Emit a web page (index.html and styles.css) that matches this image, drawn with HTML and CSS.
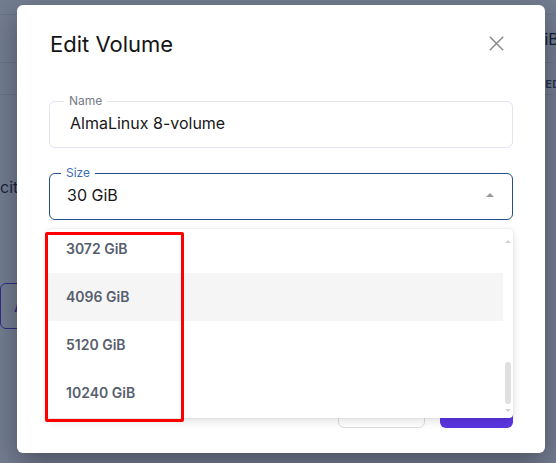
FILE: index.html
```html
<!DOCTYPE html>
<html lang="en">
<head>
<meta charset="utf-8">
<title>Edit Volume</title>
<link rel="stylesheet" href="styles.css">
</head>
<body>
<div class="page">
  <div class="page-row row-a"></div>
  <div class="page-row row-b"><span>30 GiB</span></div>
  <div class="page-row row-c"><span>Used</span></div>
  <p class="page-text">city</p>
  <div class="page-btn">Add Volume</div>
</div>

<div class="overlay">
  <div class="modal">
    <div class="modal-head">
      <h2 class="modal-title">Edit Volume</h2>
      <button class="close" aria-label="Close">
        <svg width="15" height="15" viewBox="0 0 15 15"><path d="M0.8 0.8 L14.2 14.2 M14.2 0.8 L0.8 14.2" stroke="#8a8a8a" stroke-width="1.5" fill="none"/></svg>
      </button>
    </div>

    <fieldset class="field field-name">
      <legend class="field-label">Name</legend>
      <div class="field-value">AlmaLinux 8-volume</div>
    </fieldset>

    <div class="select-wrap">
      <fieldset class="field field-size">
        <legend class="field-label">Size</legend>
        <div class="field-value"><span>30 GiB</span><span class="caret"></span></div>
      </fieldset>
      <div class="menu">
        <div class="menu-list">
          <div class="menu-items">
            <div class="menu-item">3072 GiB</div>
            <div class="menu-item is-hover">4096 GiB</div>
            <div class="menu-item">5120 GiB</div>
            <div class="menu-item">10240 GiB</div>
          </div>
        </div>
        <div class="menu-scroll">
          <span class="arrow arrow-up"></span>
          <span class="track"><span class="thumb"></span></span>
          <span class="arrow arrow-down"></span>
        </div>
      </div>
    </div>

    <div class="modal-foot">
      <button class="btn btn-cancel">Cancel</button>
      <button class="btn btn-primary">Save</button>
    </div>

    <div class="annotation"></div>
  </div>
</div>
</body>
</html>
```

FILE: styles.css
```css
* { box-sizing: border-box; }

html, body {
  margin: 0;
  height: 100%;
  overflow: hidden;
}

body {
  position: relative;
  width: 556px;
  height: 463px;
  background: #ffffff;
  color: #1f2937;
  font-family: Inter, "Noto Sans", "Liberation Sans", sans-serif;
}

/* background page */
.page { width: 620px; }

.page-row {
  display: flex;
  align-items: center;
  border-bottom: 1px solid #e3e6ec;
}

.row-a { height: 15px; }

.row-b {
  height: 48px;
  padding-left: 508px;
  font-size: 16px;
  color: #111827;
}

.row-c {
  height: 32px;
  padding-left: 529px;
  padding-bottom: 3px;
  align-items: flex-end;
  font-size: 11px;
  font-weight: 600;
  text-transform: uppercase;
  letter-spacing: 0.04em;
  color: #374151;
}

.page-text {
  margin: 82px 0 0;
  font-size: 16px;
  line-height: 20px;
  color: #1f2937;
}

.page-btn {
  margin-top: 86px;
  width: 140px;
  height: 46px;
  display: flex;
  align-items: center;
  padding-left: 13px;
  border: 1px solid #5b34e3;
  border-radius: 6px;
  color: #5b34e3;
  font-size: 16px;
  font-weight: 500;
}

/* overlay + modal */
.overlay {
  position: absolute;
  inset: 0;
  display: flex;
  padding: 5px 11px 10px 17px;
  background: rgba(22, 38, 72, 0.6);
}

.modal {
  position: relative;
  flex: 1;
  display: flex;
  flex-direction: column;
  padding: 25px 32px 25px 32px;
  background: #ffffff;
  border-radius: 6px;
  box-shadow: 0 10px 28px rgba(0, 0, 0, 0.35);
}

.modal-head {
  display: flex;
  justify-content: space-between;
  align-items: flex-start;
}

.modal-title {
  margin: 0;
  padding-left: 1px;
  font-size: 22px;
  line-height: 28px;
  font-weight: 400;
  color: #141414;
}

.close {
  margin: 6px 9px 0 0;
  padding: 0;
  border: 0;
  background: none;
  width: 15px;
  height: 15px;
  display: block;
}
.close svg { display: block; }

/* fields */
.field {
  margin: 0;
  padding: 0;
  min-width: 0;
  border: 1px solid #e2e4ef;
  border-radius: 6px;
}

.field-name { margin-top: 36px; }

.field-label {
  padding: 0 5px;
  font-size: 12px;
  line-height: 14px;
  color: #767b86;
}

.field-name .field-label { margin-left: 14px; }

.field-value {
  display: flex;
  justify-content: space-between;
  align-items: center;
  padding: 5px 18px 14px 20px;
  font-size: 16px;
  line-height: 20px;
  color: #171717;
}

.select-wrap {
  position: relative;
  margin-top: 18px;
}

.field-size { border-color: #234f8e; }
.field-size .field-label { margin-left: 11px; color: #3d6cb2; }
.field-size .field-value { padding-left: 17px; }

.caret {
  width: 0;
  height: 0;
  border-left: 4px solid transparent;
  border-right: 4px solid transparent;
  border-bottom: 4px solid #9b9b9b;
}

/* dropdown menu */
.menu {
  position: absolute;
  z-index: 3;
  top: calc(100% + 9px);
  left: -1px;
  right: 0;
  height: 189px;
  display: flex;
  overflow: hidden;
  background: #ffffff;
  border-radius: 4px;
  box-shadow: 0 3px 10px rgba(0, 0, 0, 0.12), 0 0 2px rgba(0, 0, 0, 0.12);
}

.menu-list {
  flex: 1;
  overflow: hidden;
}

.menu-items { margin-top: -4px; }

.menu-item {
  height: 48px;
  line-height: 48px;
  padding-left: 18px;
  font-size: 14px;
  font-weight: 600;
  color: #565e6d;
}

.menu-item.is-hover { background: #f5f5f5; }

.menu-scroll {
  width: 10px;
  display: flex;
  flex-direction: column;
  align-items: center;
  padding: 11px 0 6px;
}

.arrow {
  width: 0;
  height: 0;
  border-left: 3px solid transparent;
  border-right: 3px solid transparent;
}
.arrow-up { border-bottom: 3px solid #d0d0d0; }
.arrow-down { border-top: 3px solid #d0d0d0; }

.track {
  flex: 1;
  display: flex;
  flex-direction: column;
  justify-content: flex-end;
  padding-bottom: 5px;
}

.thumb {
  width: 6px;
  height: 42px;
  border-radius: 3px;
  background: #e0e0e0;
}

/* footer */
.modal-foot {
  margin-top: auto;
  display: flex;
  justify-content: flex-end;
  gap: 15px;
}

.btn {
  height: 36px;
  border-radius: 6px;
  font-family: inherit;
  font-size: 14px;
  font-weight: 600;
}

.btn-cancel {
  width: 87px;
  background: #ffffff;
  border: 1px solid #dcdcdc;
  color: #374151;
}

.btn-primary {
  width: 73px;
  background: #5b35e0;
  border: 0;
  color: #ffffff;
}

/* red annotation frame */
.annotation {
  position: absolute;
  z-index: 5;
  left: 28px;
  top: 227px;
  width: 139px;
  height: 190px;
  border: 3px solid #ff0000;
  border-radius: 2px;
  pointer-events: none;
}
```
